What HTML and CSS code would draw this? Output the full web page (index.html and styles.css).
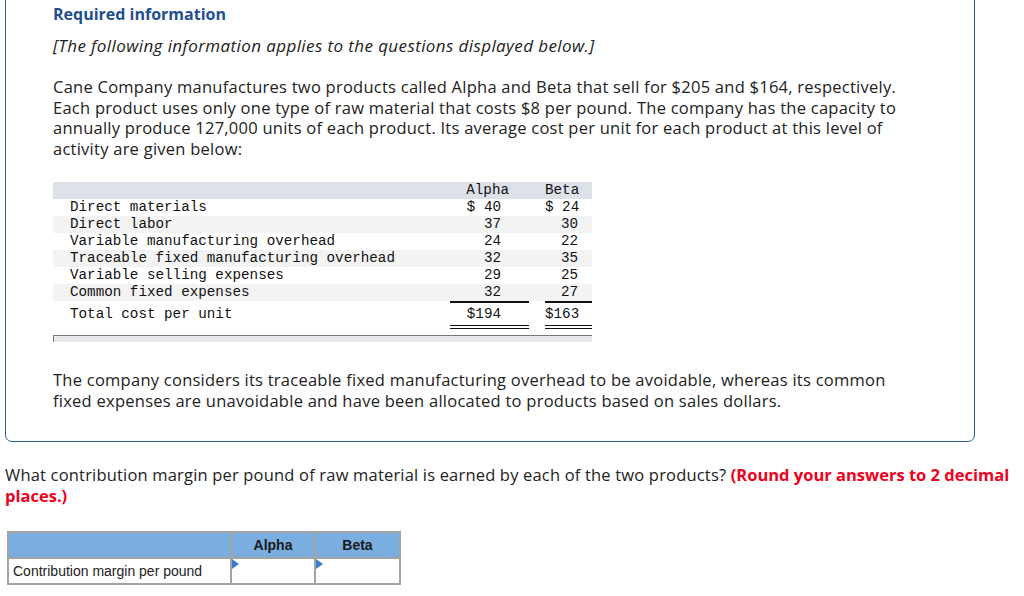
FILE: index.html
```html
<!DOCTYPE html>
<html>
<head>
<meta charset="utf-8">
<link rel="stylesheet" href="styles.css">
</head>
<body>
<div class="info-box">
  <h2 class="req-title">Required information</h2>
  <p class="note">[The following information applies to the questions displayed below.]</p>
  <p class="para">Cane Company manufactures two products called Alpha and Beta that sell for $205 and $164, respectively. Each product uses only one type of raw material that costs $8 per pound. The company has the capacity to annually produce 127,000 units of each product. Its average cost per unit for each product at this level of activity are given below:</p>
  <div class="cost-table">
    <div class="row head"><span class="lbl"></span><span class="a h">Alpha</span><span class="sp"></span><span class="b h">Beta</span></div>
    <div class="row"><span class="lbl">Direct materials</span><span class="a">$ 40</span><span class="sp"></span><span class="b">$ 24</span></div>
    <div class="row alt"><span class="lbl">Direct labor</span><span class="a">37</span><span class="sp"></span><span class="b">30</span></div>
    <div class="row"><span class="lbl">Variable manufacturing overhead</span><span class="a">24</span><span class="sp"></span><span class="b">22</span></div>
    <div class="row alt"><span class="lbl">Traceable fixed manufacturing overhead</span><span class="a">32</span><span class="sp"></span><span class="b">35</span></div>
    <div class="row"><span class="lbl">Variable selling expenses</span><span class="a">29</span><span class="sp"></span><span class="b">25</span></div>
    <div class="row alt last"><span class="lbl">Common fixed expenses</span><span class="a">32</span><span class="sp"></span><span class="b">27</span></div>
    <div class="row total"><span class="lbl">Total cost per unit</span><span class="a">$194</span><span class="sp"></span><span class="b">$163</span></div>
    <div class="table-foot"></div>
  </div>
  <p class="para second">The company considers its traceable fixed manufacturing overhead to be avoidable, whereas its common fixed expenses are unavoidable and have been allocated to products based on sales dollars.</p>
</div>
<p class="question">What contribution margin per pound of raw material is earned by each of the two products? <strong class="hint">(Round your answers to 2 decimal places.)</strong></p>
<table class="answer">
  <tr class="ans-head"><th></th><th>Alpha</th><th>Beta</th></tr>
  <tr><td class="ans-lbl">Contribution margin per pound</td><td class="input"><span class="tri"></span></td><td class="input"><span class="tri"></span></td></tr>
</table>
</body>
</html>
```
FILE: styles.css
```css
body {
  margin: 0;
  font-family: "Open Sans", "Liberation Sans", sans-serif;
  color: #222;
  background: #fff;
}
.info-box {
  margin: -12px 0 0 5px;
  width: 970px;
  border: 1.5px solid #2d5a94;
  border-radius: 0 0 7px 7px;
  padding: 14px 0 30px 47px;
  box-sizing: border-box;
}
.req-title {
  margin: 0;
  font-size: 16px;
  font-weight: bold;
  color: #1f4f8f;
  line-height: 22px;
}
.note {
  margin: 10px 0 0;
  font-style: italic;
  font-size: 17px;
  letter-spacing: 0.4px;
  line-height: 21px;
}
.para {
  margin: 21px 0 0;
  font-size: 16.5px;
  letter-spacing: 0.25px;
  line-height: 20.7px;
  width: 860px;
}
.para.second { margin-top: 28px; }
.cost-table {
  margin-top: 22px;
  width: 539px;
  font-family: "Liberation Mono", monospace;
  font-size: 14.25px;
  color: #111;
  letter-spacing: 0;
}
.row {
  display: grid;
  grid-template-columns: 397px 79px 16px 47px;
  height: 17px;
  line-height: 17px;
  white-space: pre;
}
.row.head { background: #dde1e8; }
.row.alt { background: #f3f3f3; }
.lbl { padding-left: 17px; }
.a { text-align: right; padding-right: 28px; }
.b { text-align: right; padding-right: 14px; }
.a.h { padding-right: 20px; }
.b.h { padding-right: 15px; }
.row.last .a, .row.last .b { border-bottom: 2px solid #111; }
.row.total { height: 28px; line-height: 26px; }
.row.total .a, .row.total .b { border-bottom: 4px double #111; height: 24px; }
.table-foot {
  margin-top: 6px;
  height: 6px;
  background: #e6e8ec;
  border-top: 1px solid #777;
  border-left: 1px solid #777;
}
.question {
  margin: 22px 0 0 5px;
  font-size: 16.5px;
  letter-spacing: 0.18px;
  line-height: 21px;
}
.hint { color: #f0001c; letter-spacing: 0; }
.answer {
  margin: 25px 0 0 7px;
  border-collapse: collapse;
  font-family: "Liberation Sans", Arial, sans-serif;
  font-size: 14px;
}
.answer th, .answer td {
  border: 2px solid #a3a3a3;
  padding: 0;
}
.ans-head th {
  background: #7aaee0;
  height: 24px;
  font-weight: bold;
  color: #1a1a1a;
}
.answer th:nth-child(1) { width: 221px; }
.answer th:nth-child(2) { width: 82px; }
.answer th:nth-child(3) { width: 83px; }
.answer td { height: 24px; vertical-align: middle; }
.ans-lbl { padding-left: 4px !important; color: #222; }
.input { position: relative; }
.tri {
  position: absolute;
  left: 0;
  top: 0;
  width: 0;
  height: 0;
  border-top: 5px solid transparent;
  border-bottom: 5px solid transparent;
  border-left: 7px solid #3a7fcf;
}
```
